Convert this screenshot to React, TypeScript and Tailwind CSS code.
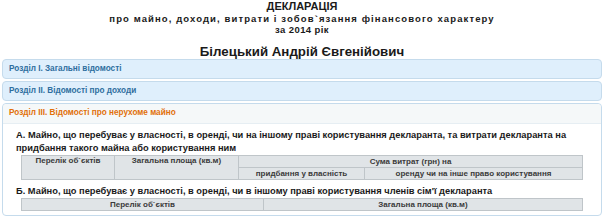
import * as React from "react";

function SectionBar({ title }: { title: string }) {
  return (
    <div className="h-[20px] flex items-center px-[6px] rounded-[4px] border border-[#c5dbec] bg-[#dfeffc] text-[#2e6e9e] text-[8.2px] font-bold">
      {title}
    </div>
  );
}

const cell = "border border-[#bfc5c9] text-center";

export default function App() {
  return (
    <div className="w-[604px] h-[219px] overflow-hidden bg-white text-[#1a1a1a] font-['Liberation_Sans',Arial,sans-serif]">
      <div className="flex flex-col items-center">
        <div className="text-[11px] leading-[13px] font-bold">ДЕКЛАРАЦІЯ</div>
        <div className="text-[9.5px] leading-[11px] font-bold tracking-[1.1px]">
          про майно, доходи, витрати і зобов`язання фінансового характеру
        </div>
        <div className="text-[9.5px] leading-[11px] font-bold tracking-[0.4px]">за 2014 рік</div>
        <div className="text-[13.3px] leading-[13px] font-bold mt-[10px]">Білецький Андрій Євгенійович</div>
      </div>

      <div className="flex flex-col gap-[2px] px-[2px] mt-[1px]">
        <SectionBar title="Розділ I. Загальні відомості" />
        <SectionBar title="Розділ II. Відомості про доходи" />
        <div className="rounded-[4px] border border-[#c5dbec] bg-white">
          <div className="h-[20px] flex items-center px-[6px] rounded-t-[4px] border-b border-[#e6eef3] bg-[#f5f8f9] text-[#e17009] text-[8.2px] font-bold">
            Розділ III. Відомості про нерухоме майно
          </div>
          <div className="pl-[13px] pr-[17px] pt-[5px] pb-[4px]">
            <div className="text-[9.3px] leading-[13px] font-bold">
              А. Майно, що перебуває у власності, в оренді, чи на іншому праві користування декларанта, та витрати декларанта на
              придбання такого майна або користування ним
            </div>
            <table className="ml-[5px] w-[562px] border-collapse text-[8px] font-bold text-[#3a3a3a] bg-[#e0e4e7]">
              <tbody>
                <tr className="h-[12px] leading-[10px]">
                  <td rowSpan={2} className={`w-[93px] align-top ${cell}`}>Перелік об`єктів</td>
                  <td rowSpan={2} className={`w-[124px] align-top ${cell}`}>Загальна площа (кв.м)</td>
                  <td colSpan={2} className={cell}>Сума витрат (грн) на</td>
                </tr>
                <tr className="h-[12px] leading-[10px]">
                  <td className={`w-[126px] ${cell}`}>придбання у власність</td>
                  <td className={cell}>оренду чи на інше право користування</td>
                </tr>
              </tbody>
            </table>
            <div className="text-[9.3px] leading-[13px] font-bold mt-[5px]">
              Б. Майно, що перебуває у власності, в оренді, чи в іншому праві користування членів сім'ї декларанта
            </div>
            <table className="ml-[5px] w-[562px] border-collapse text-[8px] font-bold text-[#3a3a3a] bg-[#e0e4e7]">
              <tbody>
                <tr className="h-[12px] leading-[10px]">
                  <td className={`w-[242px] ${cell}`}>Перелік об`єктів</td>
                  <td className={cell}>Загальна площа (кв.м)</td>
                </tr>
              </tbody>
            </table>
          </div>
        </div>
      </div>
    </div>
  );
}
